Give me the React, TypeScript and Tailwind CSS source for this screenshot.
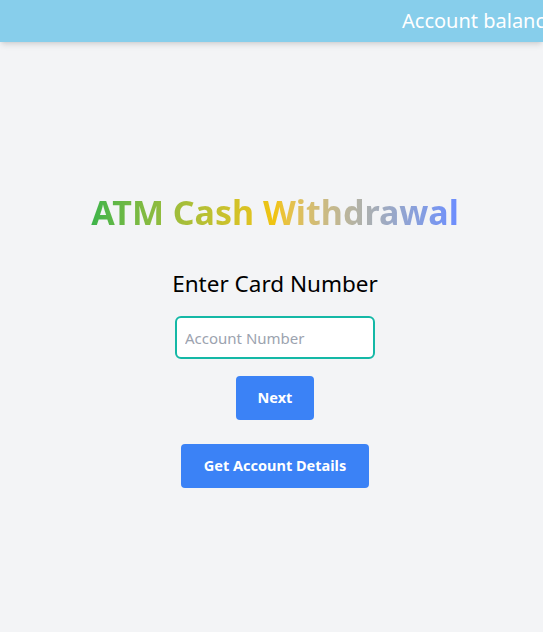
import { useState } from 'react'

export default function App() {
  const [card, setCard] = useState('')

  return (
    <div
      className="min-h-screen w-full bg-gray-100"
      style={{ fontFamily: '"Noto Sans", "Open Sans", sans-serif' }}
    >
      <header className="h-[42px] w-full overflow-hidden whitespace-nowrap bg-[#87ceeb] shadow-md flex items-center pl-[402px]">
        <span className="text-xl text-white">Account balance: ₹ 0</span>
      </header>

      <main className="flex flex-col items-center pl-[7px] pt-[147px]">
        <h1 className="bg-gradient-to-r from-[#3bb44a] via-[#f1c40f] to-[#6b8cff] bg-clip-text text-[34px] font-bold leading-[46px] text-transparent">
          ATM Cash Withdrawal
        </h1>

        <p className="mt-[33px] text-[22.5px] leading-8 text-black">Enter Card Number</p>

        <input
          autoFocus
          className="mt-[16px] h-[43px] w-[200px] rounded-md border-2 border-[#14b8a6] bg-white px-2 text-[15px] outline-none placeholder:text-[#9ca3af]"
          placeholder="Account Number"
          value={card}
          onChange={(event) => setCard(event.target.value)}
        />

        <button className="mt-[17px] h-[44px] w-[78px] rounded bg-[#3b82f6] text-[14.5px] font-bold text-white">
          Next
        </button>

        <button className="mt-[24px] h-[44px] w-[188px] rounded bg-[#3b82f6] text-[14.5px] font-bold text-white">
          Get Account Details
        </button>
      </main>
    </div>
  )
}
